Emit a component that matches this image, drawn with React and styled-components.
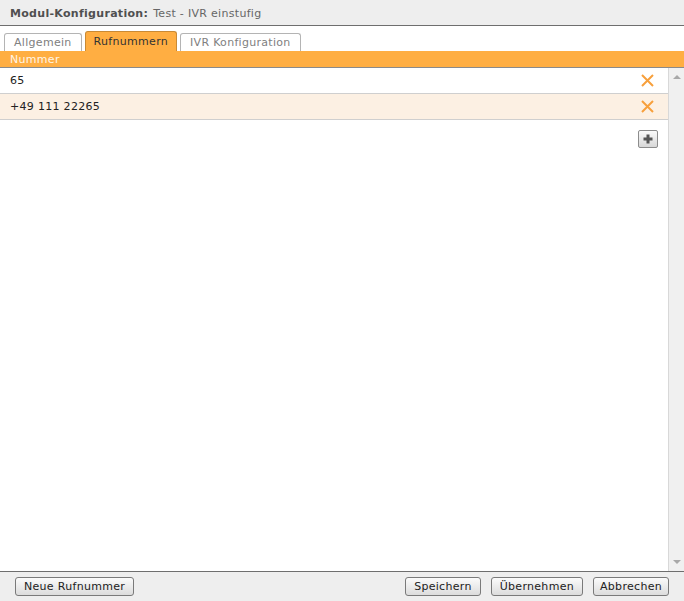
import styled, { createGlobalStyle } from "styled-components";

const GlobalStyle = createGlobalStyle`
    html, body {
        margin: 0;
        padding: 0;
        background: #ffffff;
    }
    body {
        font-family: "DejaVu Sans", Verdana, sans-serif;
        font-size: 11px;
        letter-spacing: 0.3px;
    }
`;

const numbers = ["65", "+49 111 22265"];

const App = () => {
    return (
        <Page>
            <GlobalStyle />
            <Header>
                <HeaderLabel>Modul-Konfiguration:</HeaderLabel>
                <HeaderValue>Test - IVR einstufig</HeaderValue>
            </Header>
            <TabBar>
                <Tab>Allgemein</Tab>
                <Tab $active>Rufnummern</Tab>
                <Tab>IVR Konfiguration</Tab>
            </TabBar>
            <ColumnHead>Nummer</ColumnHead>
            <Body>
                <List>
                    {numbers.map((n, i) => (
                        <Row key={n} $odd={i % 2 === 1}>
                            <span>{n}</span>
                            <RemoveIcon width="13" height="13" viewBox="0 0 13 13">
                                <path d="M1 1 L12 12 M12 1 L1 12" stroke="#f7a03c" strokeWidth="2" />
                            </RemoveIcon>
                        </Row>
                    ))}
                    <AddWrap>
                        <AddButton>
                            <svg width="10" height="10" viewBox="0 0 10 10">
                                <path d="M3.5 0.5 H6.5 V3.5 H9.5 V6.5 H6.5 V9.5 H3.5 V6.5 H0.5 V3.5 H3.5 Z" fill="#555" />
                            </svg>
                        </AddButton>
                    </AddWrap>
                </List>
                <Scrollbar>
                    <svg width="8" height="5" viewBox="0 0 8 5">
                        <path d="M0 5 L4 1 L8 5 Z" fill="#a8a8a8" />
                    </svg>
                    <svg width="8" height="5" viewBox="0 0 8 5">
                        <path d="M0 0 L4 4 L8 0 Z" fill="#a8a8a8" />
                    </svg>
                </Scrollbar>
            </Body>
            <Footer>
                <Button>Neue Rufnummer</Button>
                <Spacer />
                <Button>Speichern</Button>
                <Button>Übernehmen</Button>
                <Button $narrow>Abbrechen</Button>
            </Footer>
        </Page>
    );
};

export default App;

const Page = styled.div`
    width: 684px;
    height: 601px;
    display: flex;
    flex-direction: column;
    overflow: hidden;
    color: #222;
`;

const Header = styled.div`
    height: 26px;
    background: #eeeeee;
    border-bottom: 1px solid #6e6e6e;
    display: flex;
    align-items: center;
    padding: 1px 0 0 10px;
    gap: 5px;
    box-sizing: border-box;
    flex-shrink: 0;
`;

const HeaderLabel = styled.span`
    font-weight: bold;
    color: #505050;
`;

const HeaderValue = styled.span`
    color: #666;
`;

const TabBar = styled.div`
    height: 25px;
    display: flex;
    align-items: flex-end;
    gap: 3px;
    padding-left: 4px;
    flex-shrink: 0;
`;

const Tab = styled.div`
    height: ${p => (p.$active ? "19px" : "17px")};
    padding: 0 ${p => (p.$active ? "8px" : "9px")};
    display: flex;
    align-items: center;
    border: 1px solid ${p => (p.$active ? "#c98a35" : "#b4b4b4")};
    border-bottom: none;
    border-radius: 3px 3px 0 0;
    background: ${p => (p.$active ? "#ffae42" : "#ffffff")};
    color: ${p => (p.$active ? "#333" : "#808080")};
`;

const ColumnHead = styled.div`
    height: 16px;
    background: #ffae42;
    border-bottom: 1px solid #8a8a8a;
    color: #fff5e6;
    padding-left: 10px;
    display: flex;
    align-items: center;
    flex-shrink: 0;
`;

const Body = styled.div`
    flex: 1;
    display: flex;
    min-height: 0;
`;

const List = styled.div`
    flex: 1;
    display: flex;
    flex-direction: column;
`;

const Row = styled.div`
    height: 25px;
    display: flex;
    align-items: center;
    justify-content: space-between;
    padding: 0 14px 0 10px;
    background: ${p => (p.$odd ? "#fcf0e3" : "#ffffff")};
    border-bottom: 1px solid #cfcfcf;
    color: #222;
`;

const RemoveIcon = styled.svg`
    display: block;
`;

const AddWrap = styled.div`
    display: flex;
    justify-content: flex-end;
    padding: 10px 10px 0 0;
`;

const AddButton = styled.div`
    width: 18px;
    height: 16px;
    border: 1px solid #8c8c8c;
    border-radius: 2px;
    background: linear-gradient(#fafafa, #d8d8d8);
    display: flex;
    align-items: center;
    justify-content: center;
`;

const Scrollbar = styled.div`
    width: 15px;
    border-left: 1px solid #d8d8d8;
    background: #f0f0f0;
    display: flex;
    flex-direction: column;
    justify-content: space-between;
    align-items: center;
    padding: 6px 0 6px;
`;

const Footer = styled.div`
    height: 29px;
    border-top: 1px solid #6e6e6e;
    background: #eeeeee;
    display: flex;
    align-items: center;
    padding: 0 15px;
    gap: 10px;
    flex-shrink: 0;
`;

const Spacer = styled.div`
    flex: 1;
`;

const Button = styled.button`
    height: 19px;
    padding: 0 ${p => (p.$narrow ? "6px" : "8px")};
    font-family: "DejaVu Sans", Verdana, sans-serif;
    font-size: 11px;
    letter-spacing: 0.3px;
    color: #222;
    border: 1px solid #7a7a7a;
    border-radius: 3px;
    background: linear-gradient(#fbfbfb, #dcdcdc);
`;
